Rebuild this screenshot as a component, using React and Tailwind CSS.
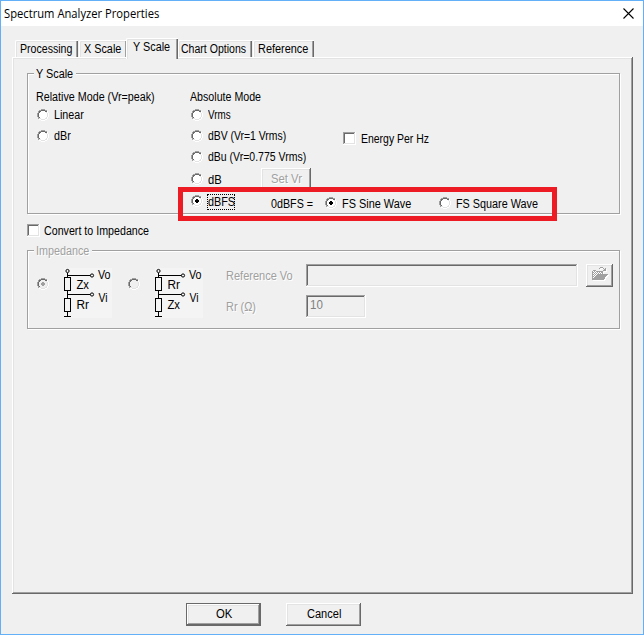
import { useLayoutEffect, useRef, useState } from "react";

const RAISED =
  "shadow-[inset_-1px_-1px_0_#696969,inset_1px_1px_0_#fff,inset_-2px_-2px_0_#a0a0a0,inset_2px_2px_0_#e3e3e3]";
const SUNKEN =
  "shadow-[inset_-1px_-1px_0_#fff,inset_1px_1px_0_#a0a0a0,inset_-2px_-2px_0_#e3e3e3,inset_2px_2px_0_#696969]";

// Text condensed to a fixed width, like a bitmap dialog font.
function Label({ w, disabled, className = "", children }) {
  const ref = useRef(null);
  const [scale, setScale] = useState(1);
  useLayoutEffect(() => {
    setScale(w / ref.current.offsetWidth);
  }, [w]);
  return (
    <span className={`block shrink-0 whitespace-nowrap ${className}`} style={{ width: w }}>
      <span
        ref={ref}
        className={`inline-block origin-left ${disabled ? "text-[#a0a0a0] [text-shadow:1px_1px_0_#fff]" : ""}`}
        style={{ transform: `scaleX(${scale})` }}
      >
        {children}
      </span>
    </span>
  );
}

function PixelRects({ rows, colors, dx = 0, dy = 0 }) {
  return rows.flatMap((row, y) =>
    [...row].map((c, x) =>
      colors[c] ? <rect key={`${x}-${y}`} x={x + dx} y={y + dy} width="1" height="1" fill={colors[c]} /> : null
    )
  );
}

const RADIO = [
  "....gggg....",
  "..ggddddgg..",
  ".gddwwwwddh.",
  ".gdwwwwwwlh.",
  "gdwwwwwwwwlh",
  "gdwwwwwwwwlh",
  "gdwwwwwwwwlh",
  "gdwwwwwwwwlh",
  ".gdwwwwwwlh.",
  ".gllwwwwllh.",
  "..hhllllhh..",
  "....hhhh....",
];

function Radio({ checked, disabled }) {
  const dot = disabled ? "#a0a0a0" : "#000";
  return (
    <svg width="12" height="13" className="block shrink-0" shapeRendering="crispEdges">
      <PixelRects
        rows={RADIO}
        colors={{ g: "#a0a0a0", d: "#696969", l: "#e3e3e3", h: "#fff", w: disabled ? "#f0f0f0" : "#fff" }}
      />
      {checked && <path d="M5 4h2v1h1v2h-1v1h-2v-1h-1v-2h1z" fill={dot} />}
    </svg>
  );
}

function RadioRow({ w, checked, className = "h-[21px]", labelClass = "pb-[2px]", children }) {
  return (
    <div className={`flex items-center gap-[5px] ${className}`}>
      <Radio checked={checked} />
      <Label w={w} className={labelClass}>{children}</Label>
    </div>
  );
}

function Checkbox() {
  return <span className={`block size-[13px] shrink-0 bg-white ${SUNKEN}`} />;
}

function GroupBox({ title, titleWidth, disabled, className, children }) {
  return (
    <div
      className={`relative w-[593px] border border-[#a0a0a0] shadow-[1px_1px_0_#fff,inset_1px_1px_0_#fff] ${className}`}
    >
      <div className="absolute -top-[8px] left-[6px] bg-[#f0f0f0] pr-[3px] pl-[2px] leading-[16px]">
        <Label w={titleWidth} disabled={disabled}>
          {title}
        </Label>
      </div>
      {children}
    </div>
  );
}

function Circuit({ top, bottom }) {
  return (
    <svg width="48" height="50" className="block shrink-0 bg-[#f4f4f4]" fill="none" stroke="#000">
      <g shapeRendering="crispEdges">
        <path d="M3.5 5v5M3.5 23v8M3.5 44v4M0 48.5h7M3.5 7.5h24M3.5 26.5h24" />
        <rect x="0.5" y="9.5" width="6" height="13" />
        <rect x="0.5" y="30.5" width="6" height="13" />
      </g>
      <g fill="#f4f4f4">
        <circle cx="3.5" cy="3" r="1.6" />
        <circle cx="28" cy="7.5" r="1.6" />
        <circle cx="28" cy="26.5" r="1.6" />
      </g>
      <g fill="#000" stroke="none" fontSize="12">
        <text x="12.5" y="21" textLength="12.5" lengthAdjust="spacingAndGlyphs">{top}</text>
        <text x="12.5" y="41" textLength="12.5" lengthAdjust="spacingAndGlyphs">{bottom}</text>
        <text x="34" y="11" textLength="12.5" lengthAdjust="spacingAndGlyphs">Vo</text>
        <text x="34.5" y="33.5" textLength="9" lengthAdjust="spacingAndGlyphs">Vi</text>
      </g>
    </svg>
  );
}

const FOLDER = [
  "........ggg.....",
  ".......g...g.g..",
  "............gg..",
  ".ggg.......ggg..",
  "gwgwggggggg.....",
  "ggwgwgwgwgg.....",
  "gwgwgwgwgwg.....",
  "ggwgwggggggggggg",
  "gwgwggggggggggg.",
  "ggwggggggggggg..",
  "gwggggggggggg...",
  "ggggggggggggg...",
  "gggggggggggg....",
];

function FolderIcon() {
  return (
    <svg width="17" height="14" className="block" shapeRendering="crispEdges">
      <PixelRects rows={FOLDER} colors={{ g: "#fff" }} dx={1} dy={1} />
      <PixelRects rows={FOLDER} colors={{ g: "#a0a0a0", w: "#fff" }} />
    </svg>
  );
}

function Tab({ w, selected, className, children }) {
  return (
    <div
      className={`flex shrink-0 rounded-tl-[2px] border-t border-l border-white bg-[#f0f0f0] shadow-[inset_-1px_0_0_#696969,inset_-2px_0_0_#a0a0a0,inset_1px_1px_0_#e3e3e3] ${
        selected ? "relative z-10 -mb-[2px] h-[21px] leading-[17px]" : "h-[17px] leading-[16px]"
      } ${className}`}
    >
      <Label w={w}>{children}</Label>
    </div>
  );
}

export default function App() {
  return (
    <div className="flex h-[635px] w-[644px] flex-col overflow-hidden border border-[#64b0f8] bg-[#f0f0f0] font-['Liberation_Sans',Arial,sans-serif] text-[12px] text-black">
      <header className="flex h-[25px] items-center justify-between bg-white pr-[9px] pl-[3px] font-['Open_Sans','Noto_Sans',sans-serif]">
        <Label w={155}>Spectrum Analyzer Properties</Label>
        <svg width="11" height="11" className="block" stroke="#000" strokeWidth="1.1">
          <path d="M0.5 0.5l10 10M10.5 0.5l-10 10" />
        </svg>
      </header>

      <nav className="flex h-[31px] items-end pl-[14px]">
        <Tab w={52} className="w-[63px] pl-[4px]">Processing</Tab>
        <Tab w={37} className="ml-px w-[48px] pl-[4px]">X Scale</Tab>
        <Tab w={37} selected className="-ml-px w-[52px] pl-[6px]">Y Scale</Tab>
        <Tab w={65} className="w-[74px] pl-[2px]">Chart Options</Tab>
        <Tab w={50} className="ml-px w-[61px] pl-[4px]">Reference</Tab>
      </nav>

      <main className={`ml-[11px] h-[537px] w-[621px] shrink-0 pt-[16px] pl-[15px] ${RAISED}`}>
        <GroupBox title="Y Scale" titleWidth={37} className="h-[141px]">
          <div className="flex pt-[15px] pl-[8px]">
            <div className="w-[154px] shrink-0">
              <Label w={119} className="h-[16px] leading-[16px]">Relative Mode (Vr=peak)</Label>
              <div className="pl-px">
                <RadioRow w={29.5}>Linear</RadioRow>
                <RadioRow w={17}>dBr</RadioRow>
              </div>
            </div>
            <div>
              <div className="flex">
                <div className="w-[153px]">
                  <Label w={71} className="h-[16px] leading-[16px]">Absolute Mode</Label>
                  <div className="pl-px">
                    <RadioRow w={23}>Vrms</RadioRow>
                    <RadioRow w={78}>dBV (Vr=1 Vrms)</RadioRow>
                    <RadioRow w={98}>dBu (Vr=0.775 Vrms)</RadioRow>
                    <div className="flex gap-[39px]">
                      <RadioRow w={14} labelClass="" className="mt-px h-[21px]">dB</RadioRow>
                      <div className={`flex h-[21px] w-[50px] items-center pl-[10px] ${RAISED}`}>
                        <Label w={31} disabled>Set Vr</Label>
                      </div>
                    </div>
                  </div>
                </div>
                <div className="mt-[43px] flex h-[13px] items-center gap-[5px]">
                  <Checkbox />
                  <Label w={68}>Energy Per Hz</Label>
                </div>
              </div>
              <div className="flex pl-px">
                <div className="mt-px flex h-[21px] w-[80px] items-center gap-[4px]">
                  <Radio checked />
                  <span className="block h-[16px] w-[28px] border border-dotted border-black leading-[14px]">
                    <Label w={27}>dBFS</Label>
                  </span>
                </div>
                <div className="mt-px flex h-[25px] items-center">
                  <Label w={42} className="mr-[12px]">0dBFS =</Label>
                  <RadioRow w={69} labelClass="" checked className="w-[114px]">FS Sine Wave</RadioRow>
                  <RadioRow w={82} labelClass="" className="">FS Square Wave</RadioRow>
                </div>
              </div>
            </div>
          </div>
          <div className="absolute top-[113px] left-[150px] h-[34px] w-[379px] border-[5px] border-[#ed1c24]" />
        </GroupBox>

        <div className="mt-[10px] flex h-[13px] items-center gap-[4px]">
          <Checkbox />
          <Label w={105}>Convert to Impedance</Label>
        </div>

        <GroupBox title="Impedance" titleWidth={53} disabled className="mt-[13px] flex h-[79px] pt-[13px] pl-[9px]">
          <div className="mt-[14px] mr-[15px]">
            <Radio checked disabled />
          </div>
          <div className="mt-[4px] mr-[16px]">
            <Circuit top="Zx" bottom="Rr" />
          </div>
          <div className="mt-[14px] mr-[15px]">
            <Radio disabled />
          </div>
          <div className="mt-[4px] mr-[23px]">
            <Circuit top="Rr" bottom="Zx" />
          </div>
          <div className="flex flex-col gap-[8px]">
            <div className="flex h-[23px] items-center">
              <Label w={67} disabled className="mr-[13px]">Reference Vo</Label>
              <div className={`mr-[8px] h-[23px] w-[272px] ${SUNKEN}`} />
              <div className={`h-[23px] w-[27px] pt-[3px] pl-[6px] ${RAISED}`}>
                <FolderIcon />
              </div>
            </div>
            <div className="flex h-[23px] items-center">
              <Label w={30} disabled className="mr-[50px]">Rr (Ω)</Label>
              <div className={`h-[23px] w-[60px] pt-[2px] pl-[4px] leading-[16px] text-[#808080] ${SUNKEN}`}>
                <Label w={12.5}>10</Label>
              </div>
            </div>
          </div>
        </GroupBox>
      </main>

      <footer className="flex gap-[25px] pt-[9px] pl-[185px]">
        <div className="flex h-[23px] w-[75px] items-center justify-center pb-px shadow-[inset_0_0_0_1px_#696969,inset_-2px_-2px_0_#696969,inset_2px_2px_0_#fff,inset_-3px_-3px_0_#a0a0a0,inset_3px_3px_0_#e3e3e3]">
          <Label w={16}>OK</Label>
        </div>
        <div className={`flex h-[23px] w-[75px] items-center justify-center pb-px ${RAISED}`}>
          <Label w={34}>Cancel</Label>
        </div>
      </footer>
    </div>
  );
}
